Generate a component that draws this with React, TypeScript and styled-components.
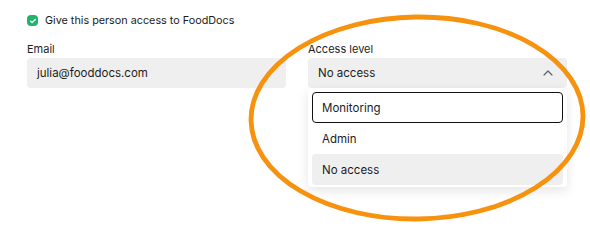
import React from "react";
import styled, {createGlobalStyle} from "styled-components";

const GlobalStyle = createGlobalStyle`
  html, body {
    margin: 0;
    padding: 0;
    background: #fff;
  }
  body {
    font-family: Inter, "Noto Sans", sans-serif;
    color: #1c1c1c;
  }
`;

const Page = styled.div`
    position: relative;
    width: 590px;
    height: 242px;
    padding: 12px 0 0 27px;
    box-sizing: border-box;
    overflow: hidden;
`;

const CheckRow = styled.label`
    display: flex;
    align-items: center;
    gap: 7px;
    height: 17px;
    font-size: 10.8px;
    margin-bottom: 13px;
`;

const CheckBox = styled.span`
    display: flex;
    align-items: center;
    justify-content: center;
    width: 11px;
    height: 11px;
    border-radius: 4px;
    background: #22b36a;
`;

const Fields = styled.div`
    display: grid;
    grid-template-columns: 259px 259px;
    column-gap: 22px;
`;

const Field = styled.div`
    position: relative;
    display: flex;
    flex-direction: column;
    gap: 2px;
`;

const FieldLabel = styled.div`
    font-size: 11px;
    height: 14px;
    line-height: 14px;
`;

const InputBox = styled.div`
    display: flex;
    align-items: center;
    justify-content: space-between;
    height: 30px;
    padding: 0 14px 0 10px;
    border-radius: 4px;
    background: #efefef;
    font-size: 11.5px;
`;

const Menu = styled.ul`
    position: absolute;
    top: 46px;
    left: 0;
    right: 0;
    margin: 0;
    padding: 4px 4px 2px;
    list-style: none;
    background: #fff;
    border-radius: 4px;
    box-shadow: 0 4px 12px rgba(0, 0, 0, 0.1);
    display: flex;
    flex-direction: column;
`;

const MenuItem = styled.li<{ $focused?: boolean, $active?: boolean }>`
    display: flex;
    align-items: center;
    height: 31px;
    box-sizing: border-box;
    border-radius: 4px;
    font-size: 11.5px;
    border: 1px solid ${props => props.$focused ? "#111" : "transparent"};
    background: ${props => props.$active ? "#efefef" : "transparent"};
    padding-left: 9px;
`;

const Annotation = styled.svg`
    position: absolute;
    left: 0;
    top: 0;
    pointer-events: none;
`;

const App: React.FC = () => {
    return (
        <>
            <GlobalStyle/>
            <Page>
                <CheckRow>
                    <CheckBox>
                        <svg width="8" height="8" viewBox="0 0 8 8">
                            <path d="M1.7 4.2 L3.2 5.6 L6.3 2.5" fill="none" stroke="#fff" strokeWidth="1.4"
                                  strokeLinecap="round" strokeLinejoin="round"/>
                        </svg>
                    </CheckBox>
                    Give this person access to FoodDocs
                </CheckRow>
                <Fields>
                    <Field>
                        <FieldLabel>Email</FieldLabel>
                        <InputBox>julia@fooddocs.com</InputBox>
                    </Field>
                    <Field>
                        <FieldLabel>Access level</FieldLabel>
                        <InputBox>
                            <span>No access</span>
                            <svg width="10" height="6" viewBox="0 0 10 6">
                                <path d="M1 5 L5 1 L9 5" fill="none" stroke="#5a6270" strokeWidth="1.2"
                                      strokeLinecap="round" strokeLinejoin="round"/>
                            </svg>
                        </InputBox>
                        <Menu>
                            <MenuItem $focused>Monitoring</MenuItem>
                            <MenuItem>Admin</MenuItem>
                            <MenuItem $active>No access</MenuItem>
                        </Menu>
                    </Field>
                </Fields>
                <Annotation width="590" height="242" viewBox="0 0 590 242">
                    <ellipse cx="417" cy="118" rx="166" ry="101" fill="none" stroke="#f7920f" strokeWidth="4.8"
                             transform="rotate(-0.8 417 118)"/>
                </Annotation>
            </Page>
        </>
    );
};

export default App;
